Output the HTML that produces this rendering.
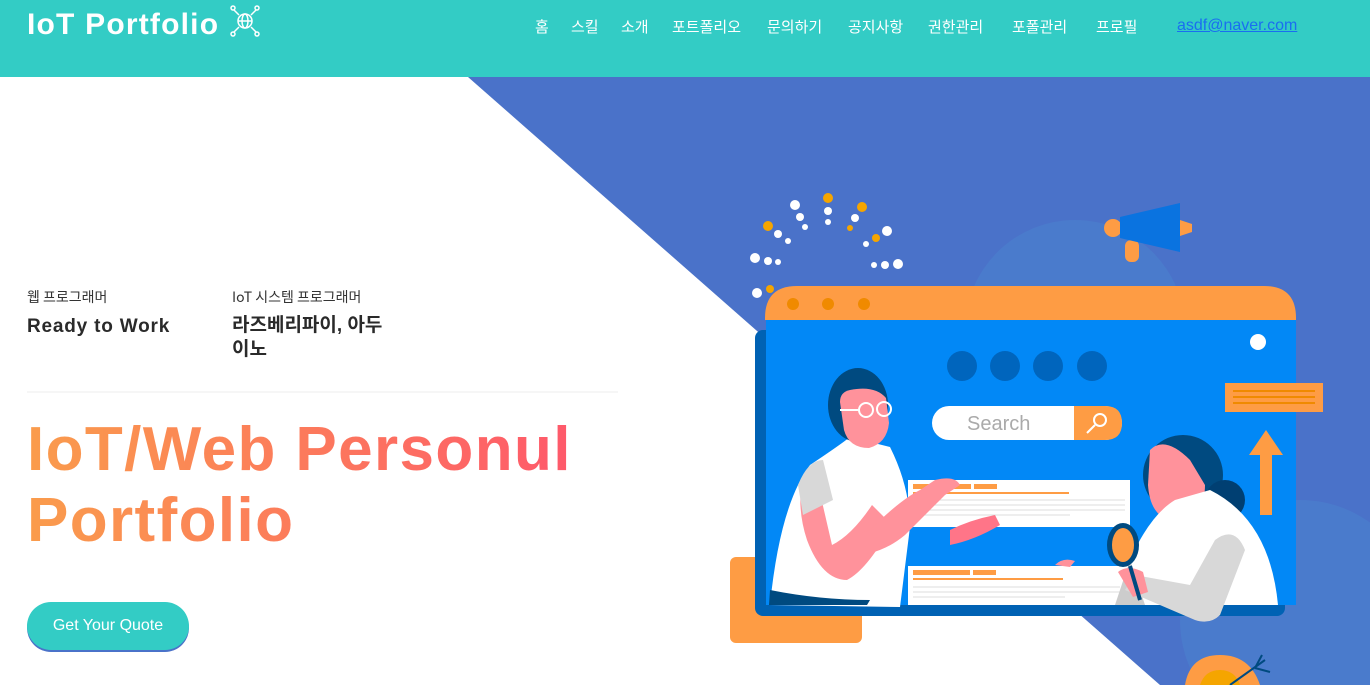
<!DOCTYPE html>
<html><head><meta charset="utf-8"><style>
*{margin:0;padding:0;box-sizing:border-box}
html,body{width:1370px;height:685px;overflow:hidden}
body{background:#fff;font-family:"Liberation Sans","Noto Sans CJK KR",sans-serif;position:relative}
.hdr{position:absolute;left:0;top:0;width:1370px;height:77px;background:#33ccc5}
.logo{position:absolute;left:27px;top:8px;color:#fff;font-weight:bold;font-size:30px;letter-spacing:1.2px}
.nav{position:absolute;top:16px;font-size:15px;color:#fff;font-family:"Noto Sans CJK KR",sans-serif}
.mail{position:absolute;left:1177px;top:17px;font-size:16px;color:#1a6ef0;text-decoration:underline}
.sm{position:absolute;font-size:14px;color:#333;font-family:"Noto Sans CJK KR",sans-serif}
.bg{position:absolute;font-size:19px;font-weight:bold;color:#2a2a2a;font-family:"Liberation Sans","Noto Sans CJK KR",sans-serif;line-height:24px}
.title{position:absolute;left:27px;top:414px;font-size:62px;font-weight:bold;line-height:71px;letter-spacing:1.4px;background:linear-gradient(90deg,#fa9c4c,#fe596b 545px);-webkit-background-clip:text;color:transparent;white-space:nowrap}
.btn{position:absolute;left:27px;top:602px;width:162px;height:48px;border-radius:24px;background:#33ccc5;box-shadow:0 2px 0 #4a72c9;color:#fff;font-size:16px;text-align:center;line-height:48px}
</style></head><body>
<svg style="position:absolute;left:0;top:0" width="1370" height="685">
<polygon points="468,77 1370,77 1370,685 1160,685" fill="#4a72c9"/>
<circle cx="1075" cy="330" r="110" fill="#4a7bcc"/>
<circle cx="1300" cy="620" r="120" fill="#4a7bcc"/>
<g fill="#fff"><circle cx="795" cy="205" r="5"/><circle cx="800" cy="217" r="4"/><circle cx="805" cy="227" r="3"/><circle cx="828" cy="211" r="4"/><circle cx="828" cy="222" r="3"/><circle cx="855" cy="218" r="4"/><circle cx="778" cy="234" r="4"/><circle cx="788" cy="241" r="3"/><circle cx="755" cy="258" r="5"/><circle cx="768" cy="261" r="4"/><circle cx="778" cy="262" r="3"/><circle cx="887" cy="231" r="5"/><circle cx="866" cy="244" r="3"/><circle cx="874" cy="265" r="3"/><circle cx="885" cy="265" r="4"/><circle cx="898" cy="264" r="5"/><circle cx="757" cy="293" r="5"/></g>
<g fill="#f5a500"><circle cx="828" cy="198" r="5"/><circle cx="862" cy="207" r="5"/><circle cx="768" cy="226" r="5"/><circle cx="850" cy="228" r="3"/><circle cx="876" cy="238" r="4"/><circle cx="770" cy="289" r="4"/></g>
<circle cx="1113" cy="228" r="9" fill="#fe9c44"/><rect x="1125" y="240" width="14" height="22" rx="6" fill="#fe9c44"/>
<polygon points="1120,217 1180,203 1180,252 1120,238" fill="#0a73e0"/><polygon points="1180,220 1192,224 1192,232 1180,236" fill="#fe9c44"/>
<rect x="730" y="557" width="132" height="86" rx="6" fill="#fe9c44"/>
<rect x="755" y="330" width="530" height="286" rx="8" fill="#0062b4"/>
<path d="M765 318 q0-32 32-32 h467 q32 0 32 32 v2 h-531z" fill="#fe9c44"/>
<rect x="766" y="320" width="530" height="285" fill="#0288f6"/>
<g fill="#f08a00"><circle cx="793" cy="304" r="6"/><circle cx="828" cy="304" r="6"/><circle cx="864" cy="304" r="6"/></g>
<circle cx="1258" cy="342" r="8" fill="#fff"/>
<g fill="#0065bd"><circle cx="962" cy="366" r="15"/><circle cx="1005" cy="366" r="15"/><circle cx="1048" cy="366" r="15"/><circle cx="1092" cy="366" r="15"/></g>
<rect x="932" y="406" width="190" height="34" rx="17" fill="#fff"/><path d="M1074 406 h31 q17 0 17 17 q0 17 -17 17 h-31z" fill="#fe9c44"/>
<text x="967" y="430" font-family="Liberation Sans,sans-serif" font-size="20" fill="#aaa">Search</text>
<circle cx="1100" cy="420" r="6" fill="none" stroke="#fff" stroke-width="2"/><line x1="1095" y1="425" x2="1087" y2="433" stroke="#fff" stroke-width="2"/>
<rect x="1225" y="383" width="98" height="29" fill="#fe9c44"/><g stroke="#f08a00" stroke-width="2"><line x1="1233" y1="391" x2="1315" y2="391"/><line x1="1233" y1="397" x2="1315" y2="397"/><line x1="1233" y1="403" x2="1315" y2="403"/></g>
<polygon points="1266,430 1283,455 1272,455 1272,515 1260,515 1260,455 1249,455" fill="#fe9c44"/>
<rect x="908" y="480" width="222" height="47" fill="#fff"/><rect x="913" y="484" width="58" height="5" fill="#fe9c44"/><rect x="974" y="484" width="23" height="5" fill="#fe9c44"/><rect x="913" y="492" width="156" height="2" fill="#fe9c44"/>
<g stroke="#ddd" stroke-width="1"><line x1="913" y1="500" x2="1125" y2="500"/><line x1="913" y1="505" x2="1125" y2="505"/><line x1="913" y1="510" x2="1125" y2="510"/><line x1="913" y1="515" x2="1070" y2="515"/></g>
<rect x="908" y="566" width="230" height="39" fill="#fff"/><rect x="913" y="570" width="57" height="5" fill="#fe9c44"/><rect x="973" y="570" width="23" height="5" fill="#fe9c44"/><rect x="913" y="578" width="150" height="2" fill="#fe9c44"/>
<g stroke="#ddd"><line x1="913" y1="587" x2="1120" y2="587"/><line x1="913" y1="592" x2="1120" y2="592"/><line x1="913" y1="597" x2="1065" y2="597"/></g>
<path d="M770 605 q10-100 40-140 q30-20 40-28 l40 10 q20 40 20 80 l-10 80z" fill="#fff"/>
<path d="M770 590 q50 10 100 10 l-3 5 h-98z" fill="#004a80"/>
<path d="M802 480 q-5 30 5 60 q15 40 40 40 q20 -10 45 -55 l-20 -20 q-20 30 -40 40 l-15 -65z" fill="#ff929b"/>
<path d="M870 530 q30 -30 50 -40 l15 -10 q20 -5 25 5 l-15 10 q-20 20 -40 40 q-30 25 -70 20 q-10 -10 35 -25z" fill="#ff929b"/>
<path d="M950 530 q20 -10 45 -15 l5 10 q-25 15 -50 20z" fill="#ff7588"/>
<path d="M798 485 q10-25 25-25 l10 40 -30 15z" fill="#d8d8d8"/>
<ellipse cx="858" cy="405" rx="30" ry="37" fill="#004a80"/>
<path d="M840 402 q0-10 10-12 q25 -5 36 8 l3 25 q-2 20 -20 25 q-20 0 -25 -18z" fill="#ff929b"/>
<g fill="none" stroke="#fff" stroke-width="2"><circle cx="866" cy="410" r="7"/><circle cx="884" cy="409" r="7"/><line x1="840" y1="410" x2="859" y2="410"/></g>
<ellipse cx="1183" cy="475" rx="40" ry="40" fill="#004a80"/><circle cx="1225" cy="500" r="20" fill="#003f72"/>
<path d="M1150 450 q15 -15 40 10 l15 25 q0 35 -35 35 q-20 -5 -22 -35z" fill="#ff929b"/>
<path d="M1130 560 q20 -45 45 -60 l35 -10 q60 30 68 115 h-148z" fill="#fff"/>
<path d="M1130 560 l15 45 l-30 0z" fill="#ccc"/>
<path d="M1215 540 q20 -15 30 10 l-25 65 q-10 10 -25 5 l-70 -30 10 -15 55 10z" fill="#d8d8d8"/>
<path d="M1118 572 q10-8 25 0 l5 20 -15 5z" fill="#ff929b"/>
<ellipse cx="1123" cy="545" rx="16" ry="22" fill="#004a80"/><ellipse cx="1123" cy="545" rx="11" ry="17" fill="#fe9c44"/>
<line x1="1130" y1="566" x2="1140" y2="600" stroke="#004a80" stroke-width="4"/>
<path d="M1055 565 q8-8 20-4 l-5 6z" fill="#ff929b"/>
<path d="M1185 685 q5-30 35-30 q30 0 40 30z" fill="#fe9c44"/><path d="M1200 685 q5-15 20-15 q15 0 20 15z" fill="#f5a500"/>
<line x1="1230" y1="685" x2="1265" y2="660" stroke="#004a80" stroke-width="2"/><line x1="1255" y1="668" x2="1262" y2="655" stroke="#004a80" stroke-width="2"/><line x1="1255" y1="668" x2="1270" y2="672" stroke="#004a80" stroke-width="2"/>
<line x1="27" y1="392" x2="618" y2="392" stroke="#eee"/>
</svg>
<div class="hdr"></div>
<div class="logo">IoT Portfolio</div>
<svg style="position:absolute;left:229px;top:5px" width="32" height="32" fill="none" stroke="#fff" stroke-width="1.5"><circle cx="16" cy="16" r="7"/><ellipse cx="16" cy="16" rx="3" ry="7"/><line x1="9" y1="16" x2="23" y2="16"/><circle cx="4" cy="3" r="2"/><circle cx="28" cy="3" r="2"/><circle cx="4" cy="29" r="2"/><circle cx="28" cy="29" r="2"/><path d="M5 5 l5 5 M27 5 l-5 5 M5 27 l5 -5 M27 27 l-5 -5"/></svg>
<span class="nav" style="left:535px">홈</span><span class="nav" style="left:571px">스킬</span><span class="nav" style="left:621px">소개</span><span class="nav" style="left:672px">포트폴리오</span><span class="nav" style="left:767px">문의하기</span><span class="nav" style="left:848px">공지사항</span><span class="nav" style="left:928px">권한관리</span><span class="nav" style="left:1012px">포폴관리</span><span class="nav" style="left:1096px">프로필</span>
<span class="mail">asdf@naver.com</span>
<div class="sm" style="left:27px;top:287px">웹 프로그래머</div>
<div class="sm" style="left:232px;top:287px">IoT 시스템 프로그래머</div>
<div class="bg" style="left:27px;top:315px;letter-spacing:0.8px">Ready to Work</div>
<div class="bg" style="left:232px;top:314px">라즈베리파이, 아두<br>이노</div>
<div class="title">IoT/Web Personul<br>Portfolio</div>
<div class="btn">Get Your Quote</div>
</body></html>
